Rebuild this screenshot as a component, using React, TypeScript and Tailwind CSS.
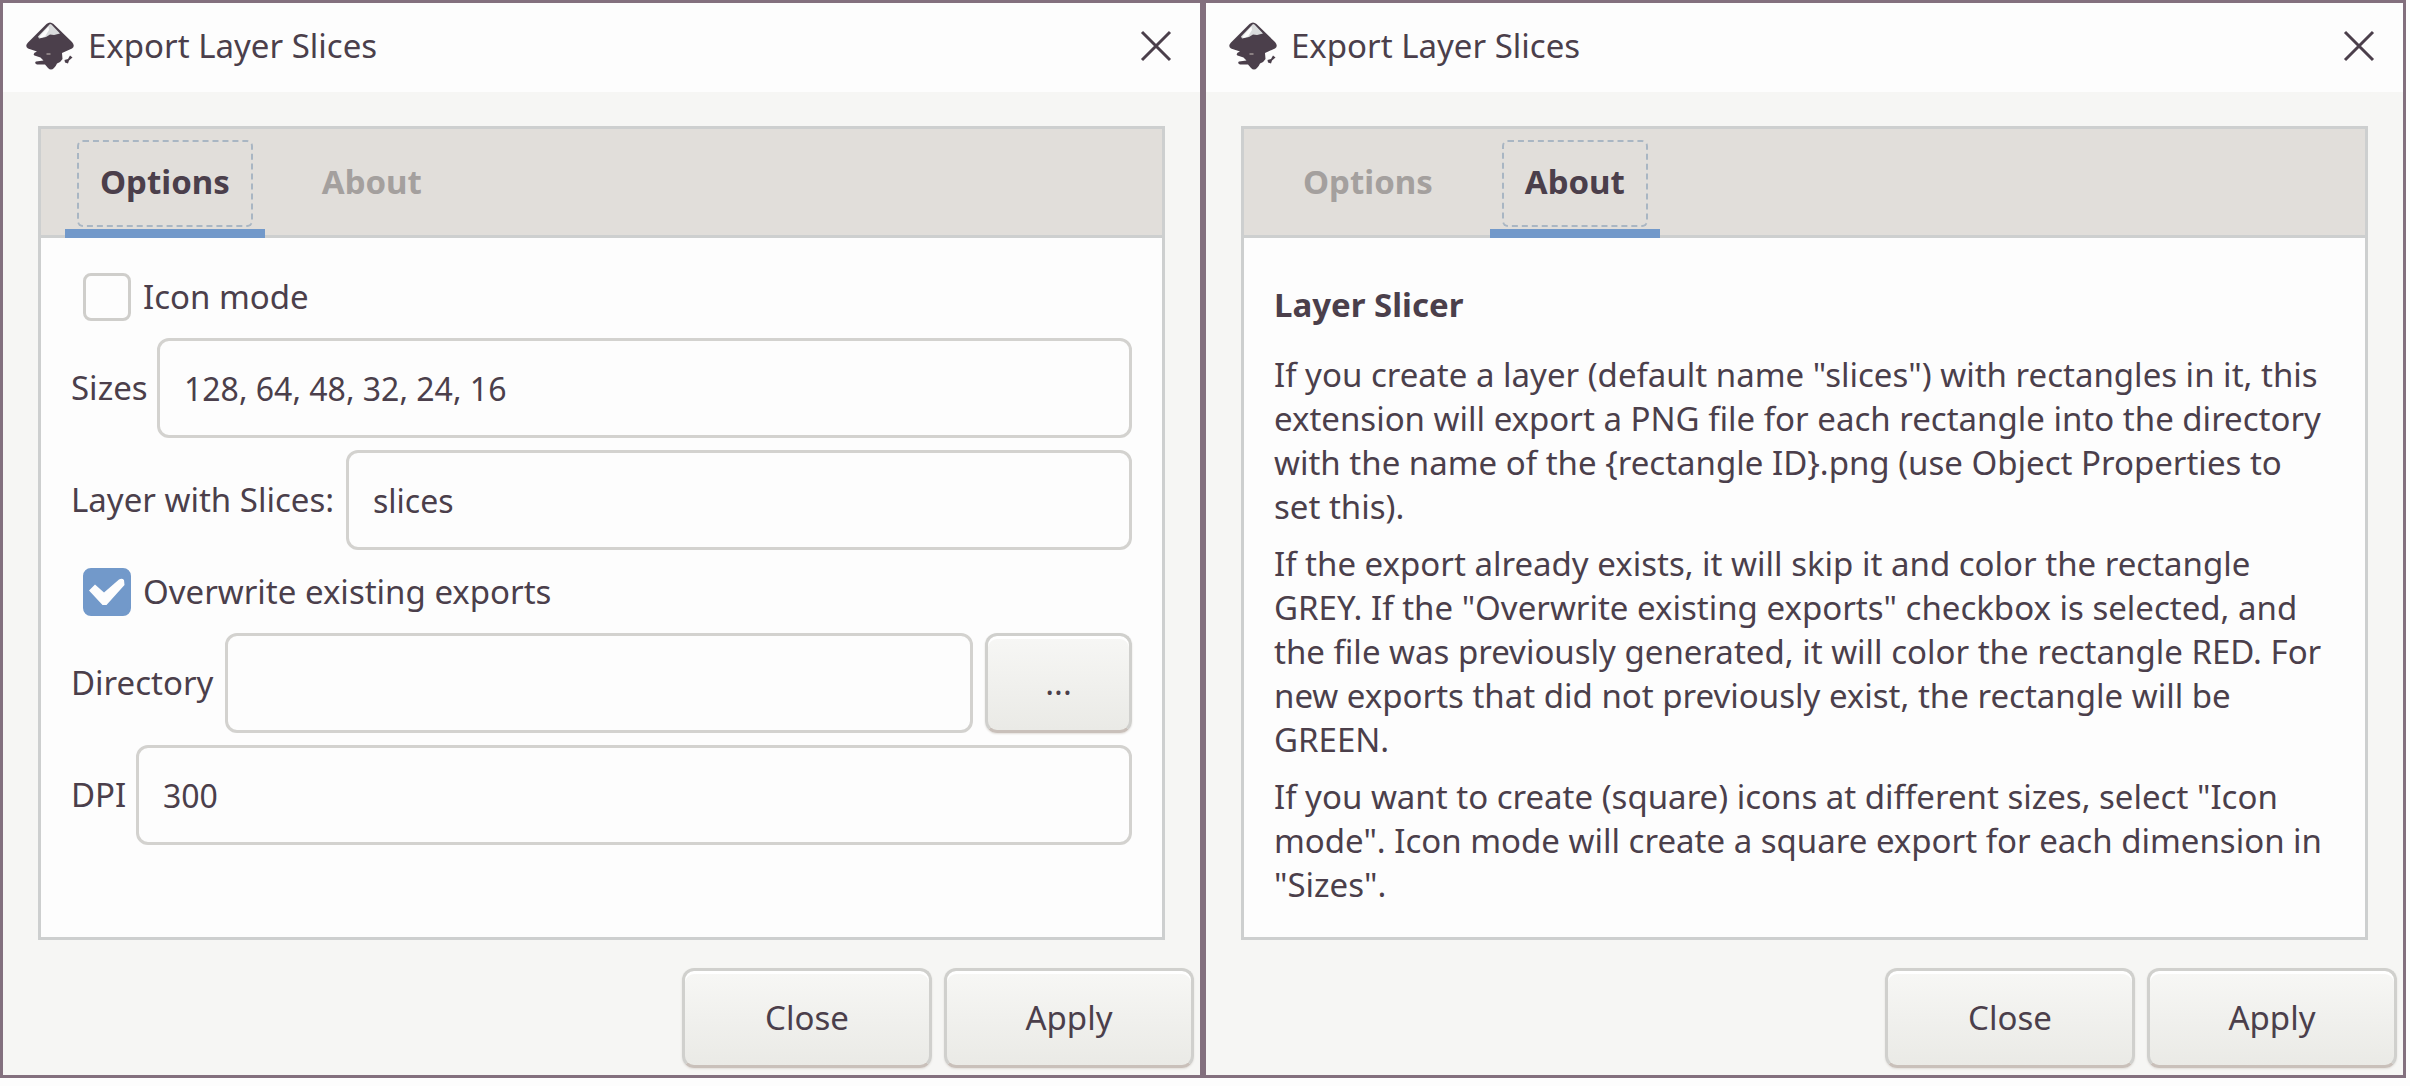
import { useId, useState, type ReactNode } from "react";

type TabName = "Options" | "About";

const tabs: TabName[] = ["Options", "About"];

const aboutText = [
  'If you create a layer (default name "slices") with rectangles in it, this extension will export a PNG file for each rectangle into the directory with the name of the {rectangle ID}.png (use Object Properties to set this).',
  'If the export already exists, it will skip it and color the rectangle GREY. If the "Overwrite existing exports" checkbox is selected, and the file was previously generated, it will color the rectangle RED. For new exports that did not previously exist, the rectangle will be GREEN.',
  'If you want to create (square) icons at different sizes, select "Icon mode". Icon mode will create a square export for each dimension in "Sizes".',
];

function InkscapeLogo() {
  return (
    <svg viewBox="0 0 48 48" className="size-12" aria-hidden="true">
      <path
        d="M20.500 2 Q24 -1 27.500 2 L46 20 Q49.500 24 46 26.500 L36 31 L36.500 37 Q35 40 31 41.500 Q30 44 28 46 Q25 49 22 46 L19 42.500 L11 42.500 Q8 41 10 39.500 L17.500 38.500 L14.500 35.500 L8.500 33.500 Q6 31.500 11 29.500 L2 26.500 Q-1.500 24 2 20.500 Z"
        fill="#4b3f4b"
      />
      <path d="M38.500 38 L42 37 L44 33.500 L46.500 35.500 L43 38.500 L42 41.500 L39 40.500 Z" fill="#4b3f4b" />
      <path d="M24 2 L12 14.500 L13 16.500 L20 15 L24 12.500 L28 13 L34 11.500 L25.500 2.500 Z" fill="#d9dbdc" />
      <path d="M22.500 4.500 L13.500 14.500 L14.500 16 L19 14.500 L23 8 Z" fill="#fdfdfd" />
      <path d="M20.500 32 h4" stroke="#c9c0ba" strokeWidth="1" />
    </svg>
  );
}

function TabStrip({ active, onSelect }: { active: TabName; onSelect: (tab: TabName) => void }) {
  return (
    <div role="tablist" className="flex h-[109px] gap-[22px] border-b-3 border-[#cdcfcf] bg-[#e1deda] px-6">
      {tabs.map((tab) => (
        <button
          key={tab}
          type="button"
          role="tab"
          aria-selected={tab === active}
          onClick={() => onSelect(tab)}
          className={
            tab === active
              ? "-mb-[3px] border-b-9 border-[#7299ca] px-3 pt-[11px] pb-[2px] font-bold text-[#4b3f4b]"
              : "px-3 pt-[11px] pb-2 font-bold text-[#a4a09e]"
          }
        >
          <span
            className={
              tab === active
                ? "flex h-full items-center rounded-md border-2 border-dashed border-[#a9b6c3] px-[21px] pb-1"
                : "flex h-full items-center rounded-md border-2 border-transparent px-[21px] pb-1"
            }
          >
            {tab}
          </span>
        </button>
      ))}
    </div>
  );
}

function CheckRow({ label, initial }: { label: string; initial: boolean }) {
  const [checked, setChecked] = useState(initial);
  return (
    <label className="flex h-[59px] items-center gap-3 pl-3">
      <span className="relative flex size-12">
        <input
          type="checkbox"
          checked={checked}
          onChange={(event) => setChecked(event.target.checked)}
          className="size-12 appearance-none rounded-lg border-3 border-[#cfcecb] bg-[#fdfdfd] checked:border-[#7299ca] checked:bg-[#7299ca]"
        />
        {checked && (
          <svg viewBox="0 0 48 48" className="pointer-events-none absolute inset-0 size-12" aria-hidden="true">
            <path d="M6 22.500 L12 16.500 L21 24.500 L36 11.500 Q39 10 41 12 L41.500 17 L23.500 37 L19.500 37 Z" fill="#fdfdfd" />
          </svg>
        )}
      </span>
      <span>{label}</span>
    </label>
  );
}

function FieldRow({
  label,
  value,
  labelClass,
  children,
}: {
  label: string;
  value: string;
  labelClass: string;
  children?: ReactNode;
}) {
  const id = useId();
  return (
    <div className="flex h-[100px] items-center gap-3">
      <label htmlFor={id} className={labelClass}>
        {label}
      </label>
      <input
        id={id}
        type="text"
        defaultValue={value}
        className="h-full min-w-0 flex-1 rounded-xl border-3 border-[#d3d2cf] bg-[#fdfdfd] px-6 text-[32px]"
      />
      {children}
    </div>
  );
}

const raised =
  "h-[100px] rounded-xl border-3 border-[#d0d0cd] border-b-[#c9c0ba] bg-linear-to-b from-[#f7f7f5] to-[#eaeae6] shadow-[inset_0_3px_0_#ffffff,0_1px_2px_#e1deda]";

function OptionsPanel() {
  return (
    <div role="tabpanel" className="flex flex-col gap-3 px-[30px] pt-[29px]">
      <CheckRow label="Icon mode" initial={false} />
      <FieldRow label="Sizes" value="128, 64, 48, 32, 24, 16" labelClass="w-[74px] whitespace-nowrap" />
      <FieldRow label="Layer with Slices:" value="slices" labelClass="w-[263px] whitespace-nowrap" />
      <CheckRow label="Overwrite existing exports" initial />
      <FieldRow label="Directory" value="" labelClass="w-[142px] whitespace-nowrap">
        <button type="button" aria-label="Browse for directory" className={`${raised} w-[147px]`}>
          ...
        </button>
      </FieldRow>
      <FieldRow label="DPI" value="300" labelClass="w-[53px] whitespace-nowrap" />
    </div>
  );
}

function AboutPanel() {
  return (
    <div role="tabpanel" className="pt-[45px] pr-[34px] pl-[30px] leading-[44px]">
      <h2 className="mb-[26px] font-bold">Layer Slicer</h2>
      <div className="flex flex-col gap-[13px]">
        {aboutText.map((text) => (
          <p key={text}>{text}</p>
        ))}
      </div>
    </div>
  );
}

function ExportDialog({ initialTab }: { initialTab: TabName }) {
  const [active, setActive] = useState<TabName>(initialTab);
  return (
    <section
      aria-label="Export Layer Slices"
      className="flex min-w-0 flex-1 flex-col border-3 border-[#83707e] bg-[#f6f6f4]"
    >
      <header className="flex h-[89px] items-center bg-[#fdfdfd] pr-7 pl-[23px] pb-1">
        <InkscapeLogo />
        <h1 className="flex-1 pl-[14px]">Export Layer Slices</h1>
        <button type="button" aria-label="Close window">
          <svg viewBox="0 0 32 32" className="size-8" aria-hidden="true">
            <path d="M2 2 L30 30 M30 2 L2 30" stroke="#4b3f4b" strokeWidth="3" fill="none" />
          </svg>
        </button>
      </header>
      <div className="mx-[35px] mt-[34px] h-[814px] border-3 border-[#cdcfcf] bg-[#fdfdfd]">
        <TabStrip active={active} onSelect={setActive} />
        {active === "Options" ? <OptionsPanel /> : <AboutPanel />}
      </div>
      <footer className="flex justify-end gap-3 px-[6px] pt-7 pb-[7px]">
        <button type="button" className={`${raised} w-[250px]`}>
          Close
        </button>
        <button type="button" className={`${raised} w-[250px]`}>
          Apply
        </button>
      </footer>
    </section>
  );
}

export default function App() {
  return (
    <main className="flex items-start bg-[#fdfdfd] pr-1 pb-2 font-['Noto_Sans',sans-serif] text-[33px] text-[#4b3f4b]">
      <ExportDialog initialTab="Options" />
      <ExportDialog initialTab="About" />
    </main>
  );
}
